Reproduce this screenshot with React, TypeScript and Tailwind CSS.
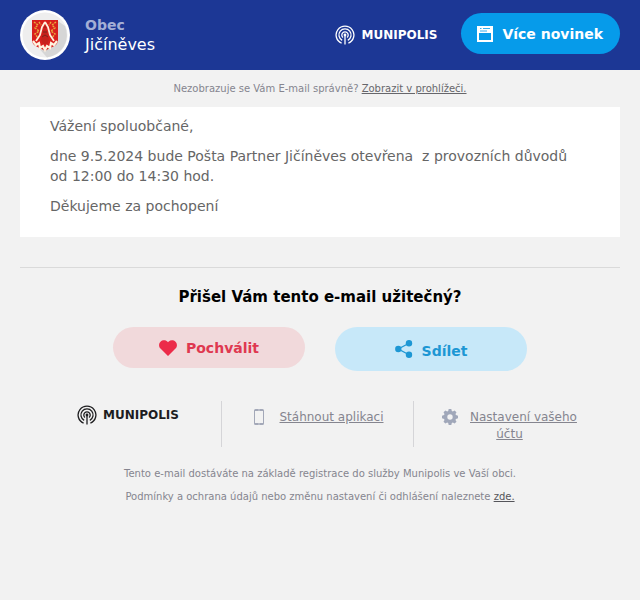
import type { ReactNode } from 'react';

interface FooterItemProps {
  icon: ReactNode;
  children: ReactNode;
}

function MunipolisLogo({ className = '' }: { className?: string }) {
  return (
    <a href="#munipolis" className={`inline-flex items-center gap-1.5 ${className}`}>
      <svg className="h-5 w-5" viewBox="0 0 20 20" fill="none" stroke="currentColor" strokeWidth={1.3} aria-hidden="true">
        <path d="M6.6 18.2A8.9 8.9 0 1 1 13.4 18.2" />
        <path d="M7.2 15.4A6.1 6.1 0 1 1 12.8 15.4" />
        <path d="M8 12.5A3.2 3.2 0 1 1 12 12.5" />
        <circle cx={10} cy={10} r={1.4} fill="currentColor" stroke="none" />
        <path d="M10 10v9.5" />
      </svg>
      <span className="text-xs leading-5 font-bold">MUNIPOLIS</span>
    </a>
  );
}

function TownCrest() {
  return (
    <svg className="h-[50px] w-[50px] shrink-0" viewBox="0 0 50 50" role="img" aria-label="Znak obce">
      <circle cx={25} cy={25} r={25} fill="#ffffff" />
      <circle cx={25} cy={25} r={22.5} fill="#eeeeee" />
      <path d="M38 11L45 16A22.5 22.5 0 0 1 27 47.4L17 36Z" fill="#d6d6d6" />
      <path d="M12 10h26v20c0 5-5 7-8 8l-5 3-5-3c-3-1-8-3-8-8z" fill="#d8201d" />
      <path
        d="M14 12l4 3-3 3 4 3-4 3 3 4M36 12l-4 3 3 3-4 3 4 3-3 4M19 12l2 3M31 12l-2 3"
        stroke="#e8ad3c"
        strokeWidth={1.4}
        fill="none"
        strokeDasharray="2 1"
      />
      <path d="M25 12l-3 5-2 8-4 6M25 12l3 5 2 8 4 6" stroke="#fff3df" strokeWidth={1.8} fill="none" />
      <path d="M13 31l3 4 3-2 1 5 3-2 2 4 2-4 3 2 1-5 3 2 3-4" stroke="#fff3df" strokeWidth={2.2} fill="none" />
      <path d="M25 17l2 4 2 9-2 4h-4l-2-4 2-9z" fill="#c5221c" />
      <path d="M24 17h2M23 22h4M22 27l3-2 3 2" stroke="#7c251c" strokeWidth={1} fill="none" />
    </svg>
  );
}

function NewsIcon() {
  return (
    <svg className="h-4 w-4" viewBox="0 0 16 16" aria-hidden="true">
      <path fill="currentColor" fillRule="evenodd" d="M0 0h16v16H0zM2 7v7h12V7z" />
      <path d="M3 2.5h1.5M6 2.5h7M3 5h7" stroke="#069bea" strokeWidth={0.8} />
    </svg>
  );
}

function HeartIcon() {
  return (
    <svg className="h-[18px] w-[18px]" viewBox="0 0 18 18" aria-hidden="true">
      <path fill="#ec2b49" d="M9 17L1.5 9.6C-.4 7.7-.4 4.6 1.5 2.7S6.5.8 8.3 2.5L9 3.2l.7-.7c1.8-1.7 4.9-1.7 6.8.2s1.9 5 0 6.9z" />
    </svg>
  );
}

function ShareIcon() {
  return (
    <svg className="h-[18px] w-[18px]" viewBox="0 0 18 18" aria-hidden="true">
      <path d="M14 3.3L3.3 9l10.7 5.7" stroke="#1d97d4" strokeWidth={1.3} fill="none" />
      <g fill="#1d97d4">
        <circle cx={14} cy={3.3} r={3.2} />
        <circle cx={3.3} cy={9} r={3.2} />
        <circle cx={14} cy={14.7} r={3.2} />
      </g>
    </svg>
  );
}

function PhoneIcon() {
  return (
    <svg className="h-4 w-4" viewBox="0 0 16 16" aria-hidden="true">
      <path
        fill="#a3a8b8"
        fillRule="evenodd"
        d="M4.5 0h7A1.5 1.5 0 0 1 13 1.5v13a1.5 1.5 0 0 1-1.5 1.5h-7A1.5 1.5 0 0 1 3 14.5v-13A1.5 1.5 0 0 1 4.5 0zM4 2v12h8V2z"
      />
      <path d="M7 1h2M7 15h2" stroke="#f2f2f2" strokeWidth={0.5} />
    </svg>
  );
}

function GearIcon() {
  return (
    <svg className="h-4 w-4" viewBox="0 0 16 16" aria-hidden="true">
      <path
        fill="#a0a7b9"
        fillRule="evenodd"
        d="M6.7 0h2.6l.5 2 1 .4 1.8-1 1.9 1.9-1 1.8.4 1 2.1.6v2.6l-2.1.6-.4 1 1 1.8-1.9 1.9-1.8-1-1 .4-.5 2H6.7l-.5-2-1-.4-1.8 1-1.9-1.9 1-1.8-.4-1L0 9.3V6.7l2.1-.6.4-1-1-1.8 1.9-1.9 1.8 1 1-.4zM8 5.3a2.7 2.7 0 1 0 0 5.4a2.7 2.7 0 1 0 0-5.4z"
      />
    </svg>
  );
}

function FooterItem({ icon, children }: FooterItemProps) {
  return (
    <div className="border-l border-[#d5d5d8] px-5 pt-2 pb-1 text-center text-xs leading-[17px] text-[#85858f]">
      <span className="mr-3 inline-block align-top">{icon}</span>
      <a href="#footer" className="underline">
        {children}
      </a>
    </div>
  );
}

export default function App() {
  return (
    <div className="min-h-screen bg-[#f2f2f2] font-['DejaVu_Sans',sans-serif]">
      <header className="flex h-[70px] items-center justify-between bg-[#1c3795] px-5 text-white">
        <div className="flex items-center gap-[15px]">
          <TownCrest />
          <div>
            <p className="text-sm leading-5 font-bold text-[#a4afd5]">Obec</p>
            <p className="text-base leading-5">Jičíněves</p>
          </div>
        </div>
        <div className="flex items-center gap-6">
          <MunipolisLogo />
          <a href="#news" className="mb-1 flex h-[41px] items-center gap-[9px] rounded-full bg-[#069bea] pt-0.5 pr-[17px] pl-4 text-sm font-bold">
            <NewsIcon />
            Více novinek
          </a>
        </div>
      </header>

      <main className="px-5">
        <p className="py-3 text-center text-[10px] leading-[13px] text-[#85858f]">
          Nezobrazuje se Vám E-mail správně?{' '}
          <a href="#browser" className="text-[#66666b] underline">
            Zobrazit v prohlížeči.
          </a>
        </p>

        <article className="space-y-2.5 bg-white px-[30px] pt-[9px] pb-[21px] text-sm leading-5 text-[#666666]">
          <p>Vážení spoluobčané,</p>
          <p>dne 9.5.2024 bude Pošta Partner Jičíněves otevřena&nbsp; z provozních důvodů od&nbsp;12:00 do 14:30 hod.</p>
          <p>Děkujeme za pochopení</p>
        </article>

        <section className="mt-[30px] border-t border-[#dadada] pt-[19px]">
          <h1 className="text-center text-[15px] leading-5 font-bold text-black">Přišel Vám tento e-mail užitečný?</h1>
          <div className="mt-5 flex items-start justify-center gap-[30px] text-sm font-bold">
            <button type="button" className="flex h-[41px] w-48 items-center justify-center gap-[9px] rounded-full bg-[#f1d9db] text-[#df3850]">
              <HeartIcon />
              Pochválit
            </button>
            <button type="button" className="flex h-11 w-48 items-center justify-center gap-[9px] rounded-full bg-[#c7e8f9] text-[#1d97d4]">
              <ShareIcon />
              <span className="pt-1">Sdílet</span>
            </button>
          </div>
        </section>
      </main>

      <footer className="pr-[35px] pl-[29px]">
        <div className="mt-[30px] grid grid-cols-3">
          <div className="flex items-start justify-center pt-1 pl-1.5">
            <MunipolisLogo className="text-[#1d1d1f]" />
          </div>
          <FooterItem icon={<PhoneIcon />}>Stáhnout aplikaci</FooterItem>
          <FooterItem icon={<GearIcon />}>Nastavení vašeho účtu</FooterItem>
        </div>
      </footer>

      <div className="mt-5 space-y-2.5 px-5 text-center text-[10px] leading-[13px] text-[#85858f]">
        <p>Tento e-mail dostáváte na základě registrace do služby Munipolis ve Vaší obci.</p>
        <p>
          Podmínky a ochrana údajů nebo změnu nastavení či odhlášení naleznete{' '}
          <a href="#terms" className="text-[#55555a] underline">
            zde.
          </a>
        </p>
      </div>
    </div>
  );
}
